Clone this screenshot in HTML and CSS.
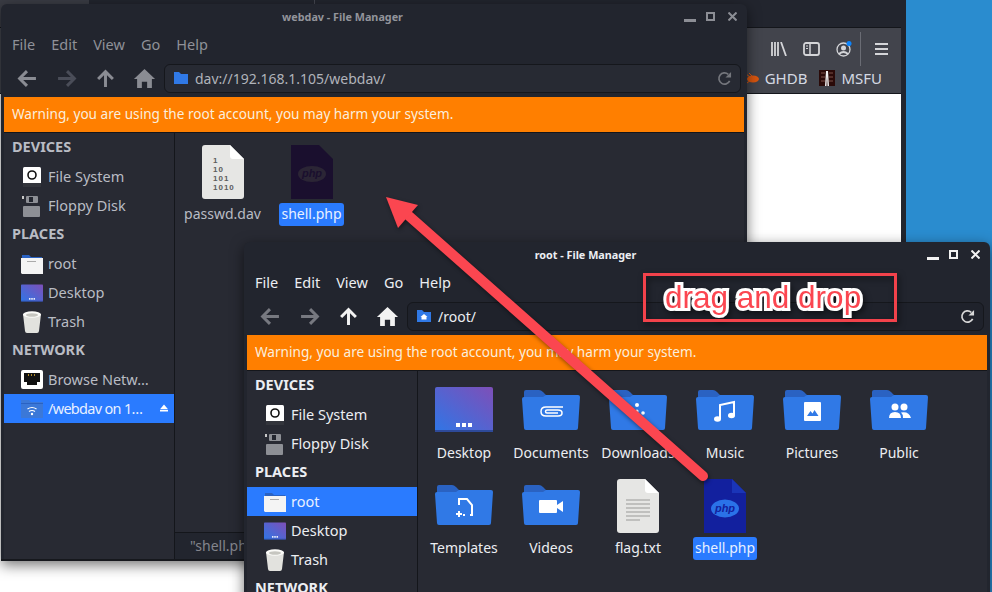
FILE: index.html
```html
<!DOCTYPE html>
<html>
<head>
    <title>webdav - File Manager</title>
    <link rel="stylesheet" href="styles.css">
</head>
<body>
    <!-- shared icons -->
    <svg class="defs" width="0" height="0">
        <defs>
            <linearGradient id="desk" x1="0" y1="1" x2="1" y2="0">
                <stop offset="0" stop-color="#2f76e6"/>
                <stop offset="1" stop-color="#7e4fb8"/>
            </linearGradient>
            <symbol id="folder" viewBox="0 0 58 40">
                <path d="M2 2q0-2 2-2h13q2 0 4 2l3 3h30q2 0 2 2v6H2z" fill="#2a62c2"/>
                <path d="M2 7h19l3-2 2 0h30q2 0 2 2l-2 31q0 2-2 2H4q-2 0-2-2L0 9q0-2 2-2z" fill="#3079e6"/>
            </symbol>
            <symbol id="desktop" viewBox="0 0 58 45">
                <rect width="58" height="45" rx="2" fill="url(#desk)"/>
                <rect y="43" width="58" height="2" fill="#2e4a9a"/>
                <rect x="21" y="36" width="4" height="4" fill="#fff"/>
                <rect x="27" y="36" width="4" height="4" fill="#fff"/>
                <rect x="33" y="36" width="4" height="4" fill="#fff"/>
            </symbol>
            <symbol id="drive" viewBox="0 0 20 22">
                <rect x="1" y="1" width="18" height="20" rx="1.5" fill="#fff"/>
                <rect x="1" y="17" width="18" height="4" fill="#33353c"/>
                <circle cx="10" cy="9" r="4" fill="none" stroke="#111" stroke-width="1.6"/>
            </symbol>
            <symbol id="floppy" viewBox="0 0 20 22">
                <rect x="1" y="11" width="17" height="11" rx="1" fill="#8d8f95"/>
                <rect x="4" y="1" width="12" height="7" rx="1" fill="#8d8f95"/>
                <rect x="7" y="2" width="4" height="5" fill="#22252e"/>
                <rect x="0" y="1" width="2" height="3" fill="#c8c8c8"/>
            </symbol>
            <symbol id="home-folder" viewBox="0 0 22 20">
                <path d="M1 1h7l2 2h11v5H1z" fill="#2a62c2"/>
                <path d="M0 4h22v16H1l-1-1z" fill="#f4f4f4"/>
                <rect x="6" y="7" width="9" height="1" fill="#aaa"/>
            </symbol>
            <symbol id="trash" viewBox="0 0 20 22">
                <path d="M1 3l2 17q.2 2 2 2h10q1.800 0 2-2l2-17z" fill="#e2e2de"/>
                <ellipse cx="10" cy="3.500" rx="9" ry="3.200" fill="#fbfbf8"/>
                <ellipse cx="10" cy="4" rx="6" ry="1.800" fill="#c6c6c0"/>
            </symbol>
            <symbol id="netport" viewBox="0 0 22 20">
                <rect width="22" height="19" rx="2" fill="#fff"/>
                <path d="M3 3h16v9h-3v3H6v-3H3z" fill="#111"/>
                <path d="M7 4h1v2H7zM10 4h1v2h-1zM13 4h1v2h-1z" fill="#b08a2a"/>
            </symbol>
            <symbol id="webdav" viewBox="0 0 22 20">
                <path d="M0 1h8l2 2h12v16H0z" fill="#3b78d8"/>
                <path d="M0 4h22v1H0z" fill="#2a62c2"/>
                <path d="M6.500 10q4.500-3 9 0M8 12.500q3-2 6 0" fill="none" stroke="#fff" stroke-width="1.200"/>
                <circle cx="11" cy="15" r="1.200" fill="#fff"/>
            </symbol>
            <symbol id="binfile" viewBox="0 0 42 54">
                <path d="M3 0h25l14 14v37q0 3-3 3H3q-3 0-3-3V3q0-3 3-3z" fill="#e6e6e4"/>
                <path d="M28 0l14 14H31q-3 0-3-3z" fill="#fff"/>
            </symbol>
            <symbol id="phpfile" viewBox="0 0 42 54">
                <path d="M0 0h28l14 14v40H0z" fill="currentColor"/>
            </symbol>
            <symbol id="back" viewBox="0 0 20 18">
                <path d="M18 9H3M9.500 2L2.500 9l7 7" fill="none" stroke="currentColor" stroke-width="2.800"/>
            </symbol>
            <symbol id="forward" viewBox="0 0 20 18">
                <path d="M2 9h15M10.500 2l7 7-7 7" fill="none" stroke="currentColor" stroke-width="2.800"/>
            </symbol>
            <symbol id="up" viewBox="0 0 20 18">
                <path d="M10 17V3M3 9.500l7-7 7 7" fill="none" stroke="currentColor" stroke-width="2.800"/>
            </symbol>
            <symbol id="home" viewBox="0 0 20 18">
                <path d="M10 0l10 9.500h-3V18h-4.500v-6h-5v6H3V9.500H0z" fill="currentColor"/>
            </symbol>
            <symbol id="reload" viewBox="0 0 16 16">
                <path d="M13.500 10.500A6 6 0 1 1 12 3.500" fill="none" stroke="currentColor" stroke-width="1.800"/>
                <path d="M15 1v6H9z" fill="currentColor"/>
            </symbol>
        </defs>
    </svg>

    <div class="desktop">
        <!-- browser behind the file managers -->
        <div class="browser">
            <div class="browser-tabs">
                <div class="tab tab-first"></div>
                <div class="tab tab-second"></div>
            </div>
            <div class="browser-tools">
                <div class="tool-icons">
                    <svg width="16" height="14" viewBox="0 0 16 14"><path d="M1 0v14M4 0v14M7 0v14M10 0l5 14" fill="none" stroke="#d4d5d8" stroke-width="1.800"/></svg>
                    <svg width="17" height="14" viewBox="0 0 17 14"><rect x="1" y="1" width="15" height="12" rx="2" fill="none" stroke="#d4d5d8" stroke-width="1.800"/><path d="M7 1v12" stroke="#d4d5d8" stroke-width="1.500"/><path d="M3 4h2M3 6.500h2" stroke="#d4d5d8"/></svg>
                    <svg class="account" width="16" height="16" viewBox="0 0 16 16"><circle cx="7.500" cy="8.500" r="6.500" fill="none" stroke="#d4d5d8" stroke-width="1.300"/><circle cx="7.500" cy="7" r="2.500" fill="#d4d5d8"/><path d="M3 13q4.500-4 9 0" fill="none" stroke="#d4d5d8" stroke-width="1.800"/><circle cx="13" cy="2.500" r="2.500" fill="#0a84ff"/></svg>
                    <span class="tool-sep"></span>
                    <svg width="13" height="12" viewBox="0 0 13 12"><path d="M0 1h13M0 6h13M0 11h13" stroke="#d4d5d8" stroke-width="1.800"/></svg>
                </div>
                <div class="bookmarks">
                    <svg width="13" height="11" viewBox="0 0 13 11"><ellipse cx="7" cy="6" rx="6" ry="3.500" fill="#d9560f"/><path d="M0 1l4 3M3 0l3 3M1 10l4-3" stroke="#d9560f"/></svg>
                    <span class="bookmark-name">GHDB</span>
                    <svg class="msfu-icon" width="16" height="16" viewBox="0 0 16 16"><rect width="16" height="16" fill="#2a0a08"/><path d="M2 3h4M10 3h4M2 7h4M10 7h4M2 11h4M10 11h4" stroke="#7a5048"/><path d="M7 1h2l1 15H8.500L8 6l-.5 10H6z" fill="#f0f0f0"/></svg>
                    <span class="bookmark-name">MSFU</span>
                </div>
            </div>
            <div class="browser-page"></div>
        </div>

        <!-- webdav window -->
        <div class="win win-back">
            <div class="titlebar">
                <div class="title">webdav - File Manager</div>
                <div class="controls">
                    <span class="ctl-min"></span>
                    <span class="ctl-max"></span>
                    <svg class="ctl-close" width="9" height="9" viewBox="0 0 9 9"><path d="M.5.500l8 8M8.500.500l-8 8" stroke="currentColor" stroke-width="2"/></svg>
                </div>
            </div>
            <div class="menubar">
                <span>File</span><span>Edit</span><span>View</span><span>Go</span><span>Help</span>
            </div>
            <div class="toolbar">
                <svg class="nav nav-on"><use href="#back"/></svg>
                <svg class="nav nav-off"><use href="#forward"/></svg>
                <svg class="nav nav-on"><use href="#up"/></svg>
                <svg class="nav nav-on"><use href="#home"/></svg>
                <div class="address">
                    <svg class="addr-icon" viewBox="0 0 14 12"><path d="M0 0h5l2 2h7v10H0z" fill="#3079e6"/></svg>
                    <span class="addr-text">dav://192.168.1.105/webdav/</span>
                    <svg class="reload"><use href="#reload"/></svg>
                </div>
            </div>
            <div class="warning">Warning, you are using the root account, you may harm your system.</div>
            <div class="panes">
                <div class="sidebar">
                    <div class="side-head">DEVICES</div>
                    <div class="side-row"><svg class="side-icon"><use href="#drive"/></svg>File System</div>
                    <div class="side-row"><svg class="side-icon"><use href="#floppy"/></svg>Floppy Disk</div>
                    <div class="side-head">PLACES</div>
                    <div class="side-row"><svg class="side-icon"><use href="#home-folder"/></svg>root</div>
                    <div class="side-row"><svg class="side-icon"><use href="#desktop"/></svg>Desktop</div>
                    <div class="side-row"><svg class="side-icon"><use href="#trash"/></svg>Trash</div>
                    <div class="side-head">NETWORK</div>
                    <div class="side-row"><svg class="side-icon"><use href="#netport"/></svg>Browse Netw…</div>
                    <div class="side-row side-selected side-tight"><svg class="side-icon"><use href="#webdav"/></svg>/webdav on 1…
                        <svg class="eject" width="8" height="8" viewBox="0 0 10 9"><path d="M5 0l5 6H0zM0 7h10v2H0z" fill="#fff"/></svg>
                    </div>
                </div>
                <div class="content">
                    <div class="files files-back">
                        <div class="file">
                            <svg class="file-icon" viewBox="0 0 42 54">
                                <use href="#binfile"/>
                                <text class="bin-digits" x="11" y="18">1</text>
                                <text class="bin-digits" x="11" y="27">10</text>
                                <text class="bin-digits" x="11" y="36">101</text>
                                <text class="bin-digits" x="11" y="45">1010</text>
                            </svg>
                            <div class="file-name">passwd.dav</div>
                        </div>
                        <div class="file">
                            <svg class="file-icon php-dim" viewBox="0 0 42 54">
                                <use href="#phpfile"/>
                                <ellipse cx="21" cy="29" rx="14" ry="8" fill="#2b2535"/>
                                <text class="php-text php-text-dim" x="21" y="32">php</text>
                            </svg>
                            <div class="file-name file-selected">shell.php</div>
                        </div>
                    </div>
                    <div class="statusbar">"shell.php" selected</div>
                </div>
            </div>
        </div>

        <!-- root window -->
        <div class="win win-front">
            <div class="titlebar">
                <div class="title">root - File Manager</div>
                <div class="controls">
                    <span class="ctl-min"></span>
                    <span class="ctl-max"></span>
                    <svg class="ctl-close" width="9" height="9" viewBox="0 0 9 9"><path d="M.5.500l8 8M8.500.500l-8 8" stroke="currentColor" stroke-width="2"/></svg>
                </div>
            </div>
            <div class="menubar">
                <span>File</span><span>Edit</span><span>View</span><span>Go</span><span>Help</span>
            </div>
            <div class="toolbar">
                <svg class="nav nav-dim"><use href="#back"/></svg>
                <svg class="nav nav-dim"><use href="#forward"/></svg>
                <svg class="nav nav-on"><use href="#up"/></svg>
                <svg class="nav nav-on"><use href="#home"/></svg>
                <div class="address">
                    <svg class="addr-icon" viewBox="0 0 14 12"><path d="M0 0h5l2 2h7v10H0z" fill="#3079e6"/><path d="M7 4l3.500 3H9.500v2.500h-5V7h-1z" fill="#fff"/></svg>
                    <span class="addr-text">/root/</span>
                    <svg class="reload"><use href="#reload"/></svg>
                </div>
            </div>
            <div class="warning">Warning, you are using the root account, you may harm your system.</div>
            <div class="panes">
                <div class="sidebar">
                    <div class="side-head">DEVICES</div>
                    <div class="side-row"><svg class="side-icon"><use href="#drive"/></svg>File System</div>
                    <div class="side-row"><svg class="side-icon"><use href="#floppy"/></svg>Floppy Disk</div>
                    <div class="side-head">PLACES</div>
                    <div class="side-row side-selected"><svg class="side-icon"><use href="#home-folder"/></svg>root</div>
                    <div class="side-row"><svg class="side-icon"><use href="#desktop"/></svg>Desktop</div>
                    <div class="side-row"><svg class="side-icon"><use href="#trash"/></svg>Trash</div>
                    <div class="side-head">NETWORK</div>
                </div>
                <div class="content">
                    <div class="files files-front">
                        <div class="file">
                            <svg class="file-icon folder-icon" viewBox="0 0 58 54"><use href="#desktop" y="3" width="58" height="45"/></svg>
                            <div class="file-name">Desktop</div>
                        </div>
                        <div class="file">
                            <svg class="file-icon folder-icon" viewBox="0 0 58 54">
                                <use href="#folder" y="6" width="58" height="40"/>
                                <path d="M41 23H24q-5 0-5 4.500t5 4.500h12q4 0 4-3t-4-3H25q-1.500 0-1.500 1.500T25 29h11" fill="none" stroke="#fff" stroke-width="1.500"/>
                            </svg>
                            <div class="file-name">Documents</div>
                        </div>
                        <div class="file">
                            <svg class="file-icon folder-icon" viewBox="0 0 58 54">
                                <use href="#folder" y="6" width="58" height="40"/>
                                <circle cx="28" cy="21" r="2" fill="#fff"/>
                                <circle cx="28" cy="27" r="1.600" fill="#fff"/>
                                <circle cx="34" cy="29" r="1.800" fill="#fff"/>
                                <circle cx="22" cy="29" r="1.800" fill="#fff"/>
                            </svg>
                            <div class="file-name">Downloads</div>
                        </div>
                        <div class="file">
                            <svg class="file-icon folder-icon" viewBox="0 0 58 54">
                                <use href="#folder" y="6" width="58" height="40"/>
                                <path d="M24 35V21l14-3v13" fill="none" stroke="#fff" stroke-width="2"/>
                                <ellipse cx="21.500" cy="35" rx="3.500" ry="2.800" fill="#fff"/>
                                <ellipse cx="35.500" cy="31.500" rx="3.500" ry="2.800" fill="#fff"/>
                            </svg>
                            <div class="file-name">Music</div>
                        </div>
                        <div class="file">
                            <svg class="file-icon folder-icon" viewBox="0 0 58 54">
                                <use href="#folder" y="6" width="58" height="40"/>
                                <rect x="21" y="18" width="17" height="19" rx="1" fill="#fff"/>
                                <path d="M24 32l3.500-5 2 2.500 2-3.500 4 6z" fill="#3079e6"/>
                            </svg>
                            <div class="file-name">Pictures</div>
                        </div>
                        <div class="file">
                            <svg class="file-icon folder-icon" viewBox="0 0 58 54">
                                <use href="#folder" y="6" width="58" height="40"/>
                                <circle cx="25" cy="23" r="3.500" fill="#fff"/>
                                <circle cx="34" cy="23" r="3.500" fill="#fff"/>
                                <path d="M19 34q0-6 6-6t6 6zM33 34q0-4-2-5.500 8-1.500 10 5.500z" fill="#fff"/>
                            </svg>
                            <div class="file-name">Public</div>
                        </div>
                        <div class="file">
                            <svg class="file-icon folder-icon" viewBox="0 0 58 54">
                                <use href="#folder" y="6" width="58" height="40"/>
                                <path d="M24 26v-6h8l5 6v10h-2M30 36h-2M24 36h-1" fill="none" stroke="#fff" stroke-width="2"/>
                                <path d="M21 35h6M24 32v6" stroke="#fff" stroke-width="2"/>
                            </svg>
                            <div class="file-name">Templates</div>
                        </div>
                        <div class="file">
                            <svg class="file-icon folder-icon" viewBox="0 0 58 54">
                                <use href="#folder" y="6" width="58" height="40"/>
                                <rect x="17" y="21" width="18" height="13" rx="1" fill="#fff"/>
                                <path d="M35 26l6-4v11l-6-4z" fill="#fff"/>
                            </svg>
                            <div class="file-name">Videos</div>
                        </div>
                        <div class="file">
                            <svg class="file-icon" viewBox="0 0 42 54">
                                <use href="#binfile"/>
                                <path d="M9 21h24M9 25h24M9 29h24M9 33h24M9 37h24M9 41h14" stroke="#9a9a98" stroke-width="1"/>
                            </svg>
                            <div class="file-name">flag.txt</div>
                        </div>
                        <div class="file">
                            <svg class="file-icon php-bright" viewBox="0 0 42 54">
                                <use href="#phpfile"/>
                                <path d="M28 0l14 14H28z" fill="#1a35b8"/>
                                <ellipse cx="21" cy="29.500" rx="14" ry="9" fill="#2a72e8"/>
                                <text class="php-text" x="21" y="33">php</text>
                            </svg>
                            <div class="file-name file-selected">shell.php</div>
                        </div>
                    </div>
                </div>
            </div>
        </div>

        <!-- red annotation on top of the screenshot -->
        <svg class="arrow" width="992" height="592" viewBox="0 0 992 592">
            <path d="M703 476L409 216" fill="none" stroke="#fb4650" stroke-width="10" stroke-linecap="round"/>
            <path d="M386 197l32 8-20 23z" fill="#fb4650"/>
        </svg>
        <div class="callout">drag and drop</div>
    </div>
</body>
</html>
```

FILE: styles.css
```css
* {
    box-sizing: border-box;
}

body {
    margin: 0;
    font-family: "Noto Sans", sans-serif;
    font-size: 14px;
}

.defs {
    position: absolute;
}

.desktop {
    position: relative;
    width: 992px;
    height: 592px;
    overflow: hidden;
    background-color: #2a8ccf; /* wallpaper */
}

/* browser window behind */
.browser {
    position: absolute;
    left: 0;
    top: 0;
    width: 906px;
    height: 592px;
    display: flex;
    flex-direction: column;
    padding-right: 5px;
    background-color: #22252e;
}

.browser-tabs {
    height: 28px;
    display: flex;
    flex-shrink: 0;
    border-bottom: 1px solid #14161b;
}

.tab-first {
    width: 89px;
    background-color: #3a3c44;
}

.tab-second {
    width: 226px;
    border-right: 1px solid #444650;
}

.browser-tools {
    height: 66px;
    flex-shrink: 0;
    background-color: #42444c;
    border-bottom: 1px solid #14161b;
    display: flex;
    flex-direction: column;
    align-items: flex-end;
    padding-right: 13px;
}

.tool-icons {
    height: 40px;
    display: flex;
    align-items: center;
    gap: 16px;
    padding-top: 1px;
}

.tool-sep {
    width: 1px;
    height: 34px;
    background-color: #6a6c74;
    margin: 0 -2px 0 -8px;
}

.bookmarks {
    display: flex;
    align-items: center;
    gap: 6px;
    color: #d4d9e2;
    font-size: 15px;
    padding-right: 6px;
}

.msfu-icon {
    margin-left: 6px;
}

.browser-page {
    flex: 1;
    background-color: #fff;
}

/* file manager windows */
.win {
    position: absolute;
    width: 746px;
    display: flex;
    flex-direction: column;
    padding: 0 3px;
    background-color: #22252e;
    border-radius: 6px 6px 0 0;
    box-shadow: 0 4px 14px rgba(0, 0, 0, 0.55);
}

.win-back {
    left: 1px;
    top: 4px;
    height: 557px;
    color: #b9bcc4;
    border-bottom: 2px solid #16181d;
}

.win-front {
    left: 244px;
    top: 242px;
    height: 360px;
    color: #eceef2;
}

.titlebar {
    height: 26px;
    flex-shrink: 0;
    display: flex;
    align-items: center;
    padding-bottom: 1px;
}

.title {
    flex: 1;
    text-align: center;
    font-size: 10.800px;
    font-weight: 700;
}

.win-back .title {
    color: #92949b;
}

.controls {
    width: 63px;
    display: flex;
    align-items: center;
    gap: 10px;
}

.win-back .controls {
    color: #8c8e95;
}

.win-front .controls {
    color: #f2f2f2;
}

.ctl-min {
    width: 12px;
    height: 3px;
    margin: 8px 0 0 3px;
    background-color: currentColor;
}

.ctl-max {
    width: 9px;
    height: 9px;
    border: 2px solid currentColor;
}

.ctl-close {
    margin-left: 3px;
}

.menubar {
    height: 30px;
    flex-shrink: 0;
    display: flex;
    align-items: center;
    padding: 0 0 2px 8px;
    gap: 16px;
    font-size: 14.500px;
}

.win-back .menubar {
    color: #8f9198;
}

.toolbar {
    height: 37px;
    flex-shrink: 0;
    display: flex;
    align-items: center;
    padding: 0 0 1px 4px;
}

.nav {
    width: 39px;
    height: 19px;
}

.nav-on {
    color: #f2f2f2;
}

.win-back .nav-on {
    color: #8a8c93;
}

.nav-off {
    color: #4a4d58;
}

.nav-dim {
    color: #777980;
}

.address {
    flex: 1;
    height: 29px;
    margin: 0 3px 0 0;
    padding: 0 8px 0 9px;
    display: flex;
    align-items: center;
    gap: 7px;
    border: 1px solid #15171c;
    border-radius: 6px;
    background-color: #1f222b;
}

.win-back .address {
    background-color: #272a33;
    color: #b0b3ba;
}

.addr-icon {
    width: 14px;
    height: 12px;
}

.addr-text {
    flex: 1;
}

.reload {
    width: 15px;
    height: 15px;
    color: #d8d8d8;
}

.win-back .reload {
    color: #74767c;
}

.warning {
    height: 36px;
    flex-shrink: 0;
    padding: 0 8px 2px;
    display: flex;
    align-items: center;
    background-color: #ff7f00;
    border-bottom: 1px solid #14161b;
    color: #fbeedd;
    font-size: 13.600px;
    white-space: nowrap;
}

.panes {
    flex: 1;
    display: flex;
    min-height: 0;
}

.sidebar {
    width: 171px;
    flex-shrink: 0;
    background-color: #282a33;
    border-right: 1px solid #14161b;
}

.side-head {
    height: 29px;
    line-height: 26px;
    padding-left: 8px;
    font-size: 14.500px;
    font-weight: 700;
}

.side-row {
    height: 29px;
    display: flex;
    align-items: center;
    padding: 0 0 2px 17px;
    font-size: 14.500px;
    white-space: nowrap;
}

.side-icon {
    width: 22px;
    height: 22px;
    margin: 2px 5px 0 0;
}

.side-selected {
    background-color: #2a7bff;
    color: #e8f0ff;
}

.side-tight {
    letter-spacing: -0.7px;
}

.eject {
    margin-left: auto;
    margin-right: 6px;
}

.content {
    flex: 1;
    display: flex;
    flex-direction: column;
    background-color: #282a33;
    min-width: 0;
}

.files {
    flex: 1;
    display: grid;
    align-content: start;
}

.files-back {
    grid-template-columns: repeat(6, 89px);
    padding: 12px 3px 0;
}

.files-front {
    grid-template-columns: repeat(6, 87px);
    row-gap: 14px;
    padding: 13px 2.500px 0;
}

.file {
    display: flex;
    flex-direction: column;
    align-items: center;
    gap: 4px;
}

.file-icon {
    width: 42px;
    height: 54px;
}

.folder-icon {
    width: 58px;
}

.file-name {
    height: 23px;
    line-height: 22px;
    padding: 0 2px;
    border-radius: 3px;
}

.file-selected {
    background-color: #2a7bff;
    color: #e8f0ff;
}

.bin-digits {
    font-family: "Liberation Sans", sans-serif;
    font-size: 8px;
    font-weight: 700;
    letter-spacing: 1px;
    fill: #5c5c5c;
}

.php-dim {
    color: #1a0f2e;
}

.php-bright {
    color: #12209e;
}

.php-text {
    font-family: "Liberation Sans", sans-serif;
    font-size: 11px;
    font-style: italic;
    font-weight: 700;
    text-anchor: middle;
    fill: #12209e;
}

.php-text-dim {
    fill: #1a0f2e;
}

.statusbar {
    height: 27px;
    flex-shrink: 0;
    padding-left: 15px;
    line-height: 26px;
    background-color: #22252e;
    border-top: 1px solid #14161b;
    color: #84868d;
}

/* annotation drawn over the windows */
.arrow {
    position: absolute;
    left: 0;
    top: 0;
    filter: drop-shadow(1px 2px 2px rgba(0, 0, 0, 0.45));
}

.callout {
    position: absolute;
    left: 643px;
    top: 273px;
    width: 254px;
    height: 49px;
    padding: 2px 0 0 19px;
    border: 3px solid #f2424b;
    font-family: "Liberation Sans", sans-serif;
    font-size: 31.500px;
    line-height: 38px;
    color: #fb4650;
    -webkit-text-stroke: 6px #fff;
    paint-order: stroke fill;
    filter: drop-shadow(2px 3px 3px rgba(0, 0, 0, 0.5));
}
```
